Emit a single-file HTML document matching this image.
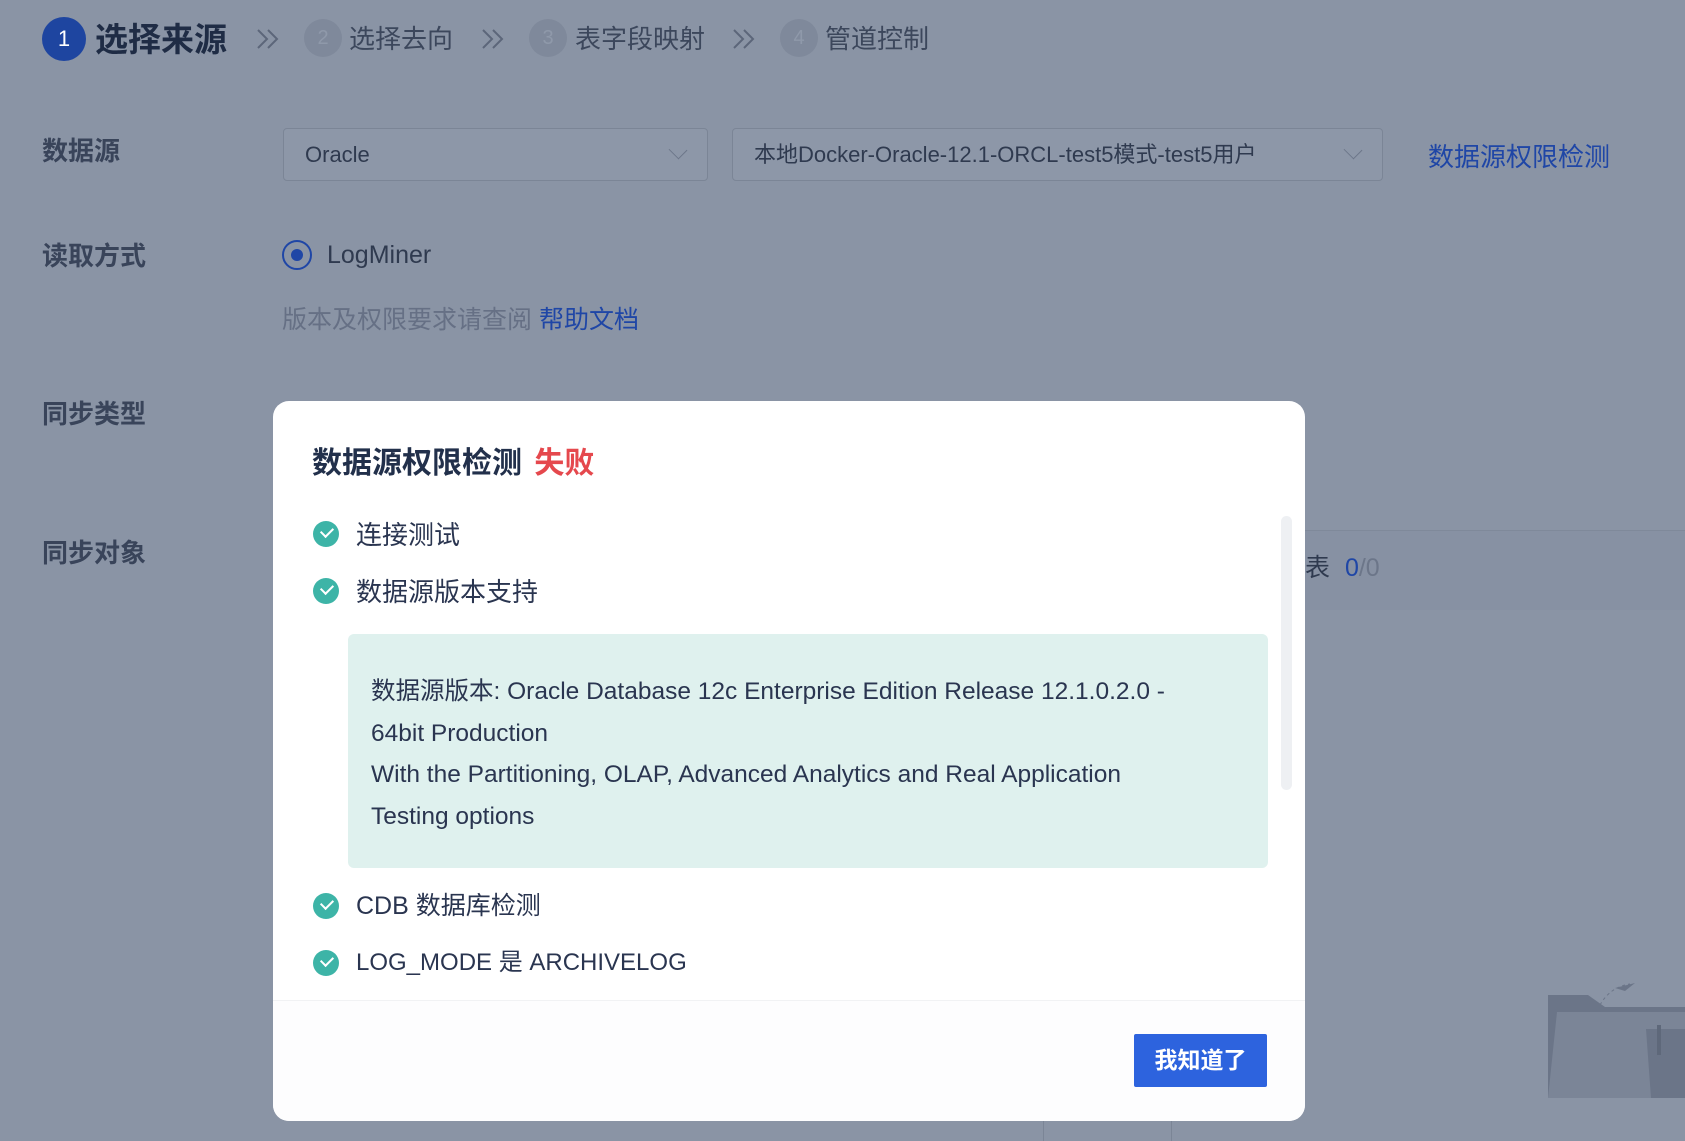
<!DOCTYPE html>
<html><head><meta charset="utf-8"><style>
*{margin:0;padding:0;box-sizing:border-box}
body{width:1685px;height:1138px;background:#8a94a5;position:relative;overflow:hidden;font-family:"Liberation Sans","Noto Sans CJK SC",sans-serif;color:#2f3a4f}
.a{position:absolute;white-space:nowrap;line-height:1.2}
.circ{position:absolute;border-radius:50%;text-align:center;color:#8f99aa;background:#7f899b;font-size:20px}
.lbl{font-size:26px;font-weight:bold;color:#39445a}
.sel{position:absolute;border:1px solid #7b8596;border-radius:4px;background:#8d97a8;height:53px;font-size:22px;color:#2f3a4f;padding:0 21px;line-height:51px}
.chev{position:absolute;right:22px;top:14px;width:14px;height:14px;border-right:1.5px solid #6c7689;border-bottom:1.5px solid #6c7689;transform:rotate(45deg) scaleY(.9);}
.modal{position:absolute;left:273px;top:401px;width:1032px;height:720px;background:#fff;border-radius:16px;overflow:hidden}
.ck{position:absolute;width:26px;height:26px;border-radius:50%;background:#3db4a7}
.ck:after{content:"";position:absolute;left:8px;top:6px;width:10px;height:6px;border-left:2.5px solid #fff;border-bottom:2.5px solid #fff;transform:rotate(-45deg)}
.it{font-size:26px;color:#2a3550}
</style></head><body>
<!-- steps -->
<div class="circ" style="left:42px;top:17px;width:44px;height:44px;background:#1e45a0;color:#fff;line-height:44px;font-size:22px">1</div>
<div class="a" style="left:95px;top:20px;font-size:33px;font-weight:bold;color:#1f2c45">选择来源</div>
<svg class="a" style="left:255px;top:28px" width="26" height="22"><path d="M3 2l9 9-9 9M13 2l9 9-9 9" stroke="#5c667a" stroke-width="2" fill="none"/></svg>
<div class="circ" style="left:304px;top:19px;width:38px;height:38px;line-height:38px">2</div>
<div class="a" style="left:349px;top:24px;font-size:26px;color:#3c475c">选择去向</div>
<svg class="a" style="left:480px;top:28px" width="26" height="22"><path d="M3 2l9 9-9 9M13 2l9 9-9 9" stroke="#5c667a" stroke-width="2" fill="none"/></svg>
<div class="circ" style="left:529px;top:19px;width:38px;height:38px;line-height:38px">3</div>
<div class="a" style="left:575px;top:24px;font-size:26px;color:#3c475c">表字段映射</div>
<svg class="a" style="left:731px;top:28px" width="26" height="22"><path d="M3 2l9 9-9 9M13 2l9 9-9 9" stroke="#5c667a" stroke-width="2" fill="none"/></svg>
<div class="circ" style="left:780px;top:19px;width:38px;height:38px;line-height:38px">4</div>
<div class="a" style="left:825px;top:24px;font-size:26px;color:#3c475c">管道控制</div>
<!-- form -->
<div class="a lbl" style="left:42px;top:136px">数据源</div>
<div class="a lbl" style="left:42px;top:241px">读取方式</div>
<div class="a lbl" style="left:42px;top:399px">同步类型</div>
<div class="a lbl" style="left:42px;top:538px">同步对象</div>
<div class="sel" style="left:283px;top:128px;width:425px">Oracle<span class="chev"></span></div>
<div class="sel" style="left:732px;top:128px;width:651px">本地Docker-Oracle-12.1-ORCL-test5模式-test5用户<span class="chev"></span></div>
<div class="a" style="left:1428px;top:142px;font-size:26px;color:#1f46a6">数据源权限检测</div>
<div class="a" style="left:282px;top:240px;width:30px;height:30px;border:2px solid #1f46a6;border-radius:50%"><div style="position:absolute;left:7px;top:7px;width:12px;height:12px;border-radius:50%;background:#1f46a6"></div></div>
<div class="a" style="left:327px;top:240px;font-size:25px;color:#2f3a4f">LogMiner</div>
<div class="a" style="left:282px;top:305px;font-size:25px;color:#667085">版本及权限要求请查阅 <span style="color:#1f46a6">帮助文档</span></div>
<div class="a" style="left:1305px;top:530px;width:380px;height:80px;background:#8791a3;border-top:1px solid #7f899a"></div>
<div class="a" style="left:1305px;top:553px;font-size:25px;color:#2f3a4f">表 <span style="color:#1f46a6;margin-left:8px">0</span><span style="color:#6c7689">/0</span></div>
<div class="a" style="left:1043px;top:1121px;width:1px;height:20px;background:#7b8596"></div>
<div class="a" style="left:1171px;top:1121px;width:1px;height:20px;background:#7b8596"></div>
<!-- folder illustration -->
<svg class="a" style="left:1535px;top:975px" width="150" height="125"><path d="M13 20h40l17 12h80v91H13z" fill="#6b7588"/><path d="M22 37h128v86H13z" fill="#7b8597"/><path d="M111 54h39v69h-34z" fill="#6b7588"/><path d="M65 30q10-18 30-21" stroke="#6b7588" stroke-dasharray="3 3" fill="none"/><path d="M80 13l20-5-10 8z" fill="#6b7588"/><rect x="122" y="50" width="4" height="30" fill="#5e687a"/></svg>
<!-- modal -->
<div class="modal">
<div class="a" style="left:39px;top:45px;font-size:30px;font-weight:bold;color:#22304b">数据源权限检测 <span style="color:#e5484d;margin-left:4px">失败</span></div>
<div class="ck" style="left:40px;top:120px"></div><div class="a it" style="left:83px;top:119px">连接测试</div>
<div class="ck" style="left:40px;top:177px"></div><div class="a it" style="left:83px;top:176px">数据源版本支持</div>
<div class="a" style="left:75px;top:233px;width:920px;height:234px;background:#dff1ee;border-radius:6px;padding:37px 72px 37px 23px;font-size:24.5px;line-height:41.5px;color:#2a3550;white-space:normal">数据源版本: Oracle Database 12c Enterprise Edition Release 12.1.0.2.0 - 64bit Production<br>With the Partitioning, OLAP, Advanced Analytics and Real Application Testing options</div>
<div class="ck" style="left:40px;top:492px"></div><div class="a it" style="left:83px;top:490px;font-size:25px">CDB 数据库检测</div>
<div class="ck" style="left:40px;top:549px"></div><div class="a it" style="left:83px;top:548px;font-size:24px">LOG_MODE 是 ARCHIVELOG</div>
<div class="a" style="left:1008px;top:115px;width:11px;height:274px;background:#eef0f3;border-radius:6px"></div>
<div class="a" style="left:0;top:599px;width:1032px;height:121px;background:#fdfdfe;border-top:1px solid #f1f2f4"></div>
<div class="a" style="left:861px;top:633px;width:133px;height:53px;background:#2d63de;border-radius:2px;color:#fff;font-size:23px;font-weight:bold;text-align:center;line-height:53px">我知道了</div>
</div>
</body></html>
